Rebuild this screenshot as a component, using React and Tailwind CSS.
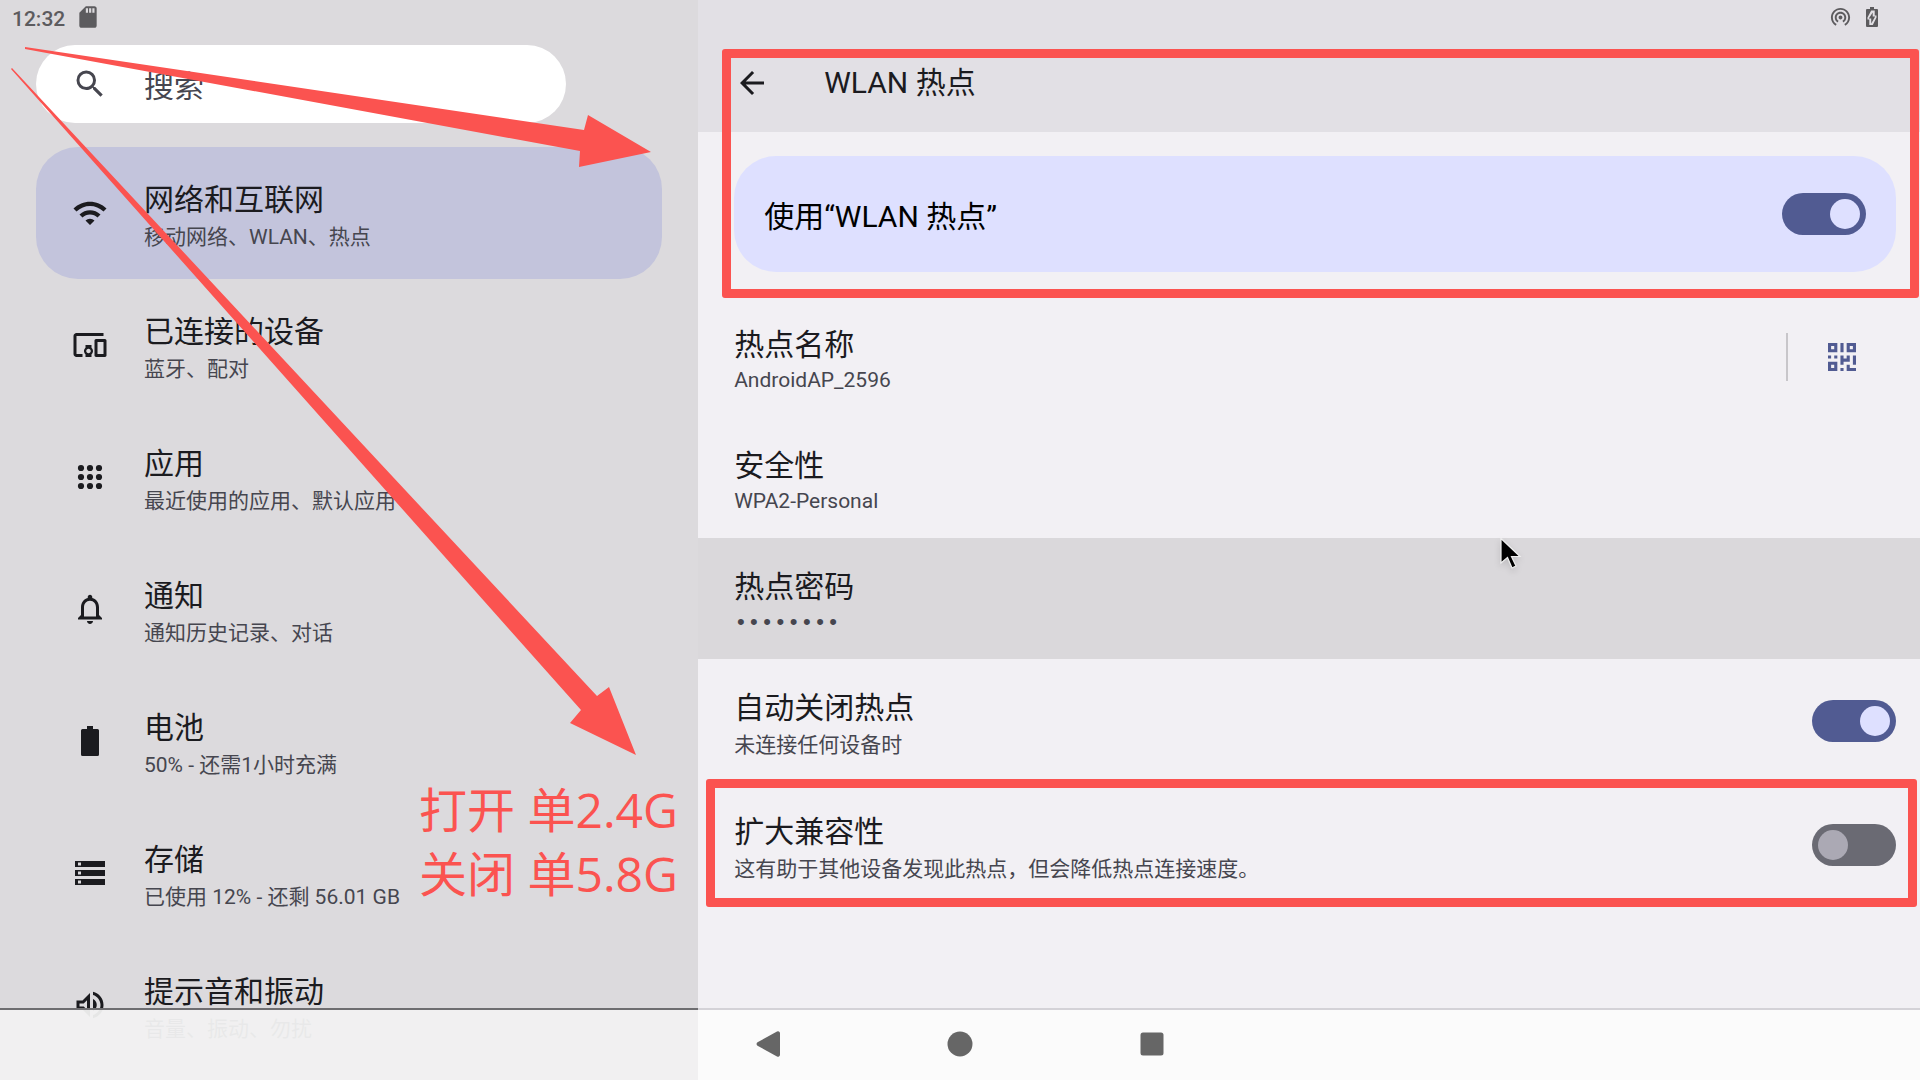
import React, { useState } from 'react';
import {
  MdSearch, MdWifi, MdOutlineDevicesOther, MdNotificationsNone,
  MdStorage, MdOutlineVolumeUp, MdArrowBack, MdSdCard, MdWifiTethering,
} from 'react-icons/md';

const AppsIcon = ({ className }) => (
  <svg viewBox="0 0 36 36" className={className} fill="currentColor" aria-hidden="true">
    {[9, 18, 27].map((y) => [9, 18, 27].map((x) => <circle key={`${x}-${y}`} cx={x} cy={y} r="3.100" />))}
  </svg>
);

const BatteryFullIcon = ({ className }) => (
  <svg viewBox="0 0 36 36" className={className} fill="currentColor" aria-hidden="true">
    <path d="M15 3h6v3h4.500A1.500 1.500 0 0 1 27 7.500v24a1.500 1.500 0 0 1-1.500 1.500h-15A1.500 1.500 0 0 1 9 31.500v-24A1.500 1.500 0 0 1 10.500 6H15z" />
  </svg>
);

// Bateria carregando da barra de status
const BatteryIcon = () => (
  <svg viewBox="0 0 12 20" className="h-5 w-3" fill="#5c5b5e" aria-hidden="true">
    <path fillRule="evenodd" d="M4 0h4v2h3a1 1 0 0 1 1 1v16a1 1 0 0 1-1 1H1a1 1 0 0 1-1-1V3a1 1 0 0 1 1-1h3zM5.200 3.500 1.500 10.500v2h1.800v5.500h3.500l3.700-7.500v-2H8.700v-5z" />
    <path d="M6.700 5.500v4h2.500l-4 7v-5H2.800z" />
  </svg>
);

const QrIcon = () => (
  <svg viewBox="0 0 9 9" className="size-7" fill="#515b92" aria-hidden="true">
    <path fillRule="evenodd" d="M0 0h3v3H0zM1 1v1h1V1zM6 0h3v3H6zM7 1v1h1V1zM0 6h3v3H0zM1 7v1h1V7z" />
    <path d="M4 0h1v3H4zM0 4h1v1H0zM2 4h1v1H2zM4 4h1v1h1V4h1v2H5v1H4zM8 4h1v3H8zM4 8h1v1H4zM6 7h1v1h2v1H6z" />
  </svg>
);

const menu = [
  { icon: MdWifi, title: '网络和互联网', summary: '移动网络、WLAN、热点', active: true },
  { icon: MdOutlineDevicesOther, title: '已连接的设备', summary: '蓝牙、配对' },
  { icon: AppsIcon, title: '应用', summary: '最近使用的应用、默认应用' },
  { icon: MdNotificationsNone, title: '通知', summary: '通知历史记录、对话' },
  { icon: BatteryFullIcon, title: '电池', summary: '50% - 还需1小时充满' },
  { icon: MdStorage, title: '存储', summary: '已使用 12% - 还剩 56.01 GB' },
  { icon: MdOutlineVolumeUp, title: '提示音和振动', summary: '音量、振动、勿扰' },
];

const MenuItem = ({ icon: Icon, title, summary, active }) => (
  <a
    href="#"
    className={`flex h-[132px] shrink-0 items-center rounded-[42px] pl-9 ${active ? 'bg-[#c3c4dc]' : ''}`}
  >
    <Icon className="size-9 shrink-0 text-[#1b1b1f]" />
    <span className="flex flex-col pt-1.5 pl-9">
      <span className="text-[30px] leading-[42px] text-[#1b1b1f]">{title}</span>
      <span className="text-[21px] leading-8 text-[#46464f]">{summary}</span>
    </span>
  </a>
);

const Switch = ({ id, checked, onChange }) => (
  <input
    id={id}
    type="checkbox"
    role="switch"
    checked={checked}
    onChange={(e) => onChange(e.target.checked)}
    className="h-[42px] w-[84px] shrink-0 cursor-pointer appearance-none rounded-full bg-[#6a6a73] p-1.5 before:block before:size-[30px] before:rounded-full before:bg-[#aba9b4] checked:bg-[#515b92] checked:before:ml-[42px] checked:before:bg-[#dee0ff]"
  />
);

const RowText = ({ title, children }) => (
  <span className="flex flex-1 flex-col self-start pt-7">
    <span className="text-[30px] leading-[42px] text-[#1b1b1f]">{title}</span>
    <span className="text-[21px] leading-7 text-[#46464f]">{children}</span>
  </span>
);

const Arrows = () => (
  <svg viewBox="0 0 698 800" className="pointer-events-none absolute top-0 left-0 h-[800px] w-[698px]" fill="#fb5350" aria-hidden="true">
    <path d="M25 47 584 130 588 115 651 152 579 167 580 151 25 49Z" />
    <path d="M12 68 597 696 609 687 636 755 570 723 581 710 11 69Z" />
  </svg>
);

const Pointer = () => (
  <svg viewBox="0 0 24 34" className="pointer-events-none absolute top-[536px] left-[800px] h-[34px] w-6 drop-shadow-md" aria-hidden="true">
    <path d="M3 2.500v24.500l6.500-5.500 4.500 10.500 4-2-4.500-9.500h8.500z" fill="#000" stroke="#eee" strokeWidth="1.200" />
  </svg>
);

export default function App() {
  const [hotspot, setHotspot] = useState(true);
  const [autoOff, setAutoOff] = useState(true);
  const [compat, setCompat] = useState(false);

  return (
    <div className="relative flex h-screen overflow-hidden bg-[#f2f0f4] font-[Roboto,'Noto_Sans_CJK_SC',sans-serif]">
      {/* Painel esquerdo */}
      <aside className="relative flex w-4/11 flex-col overflow-hidden bg-[#dcdadd] px-9">
        <div className="-ml-6 flex h-[45px] shrink-0 items-start gap-2.5 pt-1 text-[#5c5b5e]">
          <span className="text-[21px] leading-[30px] font-medium">12:32</span>
          <MdSdCard className="size-[26px]" />
        </div>

        <label className="mr-24 flex h-[78px] shrink-0 items-center rounded-full bg-white pl-9 text-[#46464f]">
          <MdSearch className="size-9 shrink-0" />
          <input
            type="text"
            aria-label="搜索"
            placeholder="搜索"
            className="ml-9 w-full min-w-0 bg-transparent pt-1.5 text-[30px] leading-[42px] outline-none placeholder:text-[#46464f]"
          />
        </label>

        <nav className="mt-6 flex flex-col">
          {menu.map((item) => <MenuItem key={item.title} {...item} />)}
        </nav>

        <div className="absolute inset-x-0 bottom-0 h-18 border-t-2 border-[#6e6d70] bg-[#f1f1f1]/95 bg-clip-padding" />
      </aside>

      {/* Painel direito */}
      <main className="relative flex min-w-0 flex-1 flex-col">
        <header className="flex h-[132px] shrink-0 flex-col bg-[#e2e0e5]">
          <div className="flex h-[34px] items-center justify-end gap-3.5 pr-[42px] text-[#5c5b5e]">
            <MdWifiTethering className="size-[23px]" />
            <BatteryIcon />
          </div>
          <div className="flex h-[100px] items-center pl-9">
            <button type="button" aria-label="返回"><MdArrowBack className="size-9 text-[#1b1b1f]" /></button>
            <h1 className="pl-[54px] text-[30px] leading-[42px] text-[#1b1b1f]">WLAN 热点</h1>
          </div>
        </header>

        <section className="flex min-h-0 flex-1 flex-col">
          <label htmlFor="hotspot" className="my-6 mr-6 ml-9 flex h-[116px] shrink-0 items-center justify-between rounded-[42px] bg-[#dee0ff] px-[30px]">
            <span className="pt-1.5 text-[30px] leading-[42px] text-black">使用“WLAN 热点”</span>
            <Switch id="hotspot" checked={hotspot} onChange={setHotspot} />
          </label>

          <div className="flex h-[121px] shrink-0 items-center pl-9">
            <RowText title="热点名称">AndroidAP_2596</RowText>
            <div className="flex h-12 w-[134px] items-center border-l-2 border-[#c8c6ca] pl-10">
              <button type="button" aria-label="二维码"><QrIcon /></button>
            </div>
          </div>
          <div className="flex h-[121px] shrink-0 items-center pl-9">
            <RowText title="安全性">WPA2-Personal</RowText>
          </div>
          <div className="flex h-[121px] shrink-0 items-center bg-[#dad8db] pl-9">
            <RowText title="热点密码"><span className="font-['Liberation_Mono',monospace] text-[22px]">••••••••</span></RowText>
          </div>
          <label htmlFor="auto-off" className="flex h-[124px] shrink-0 items-center pr-6 pl-9">
            <RowText title="自动关闭热点"><span className="leading-8">未连接任何设备时</span></RowText>
            <Switch id="auto-off" checked={autoOff} onChange={setAutoOff} />
          </label>
          <label htmlFor="compat" className="relative flex h-[124px] shrink-0 items-center pr-6 pl-9">
            <RowText title="扩大兼容性"><span className="leading-8">这有助于其他设备发现此热点，但会降低热点连接速度。</span></RowText>
            <Switch id="compat" checked={compat} onChange={setCompat} />
            <span className="pointer-events-none absolute -top-1 right-[3px] bottom-0 left-2 rounded-[3px] border-9 border-[#fb5350]" />
          </label>
        </section>

        <div className="h-18 shrink-0 border-t-2 border-[#d4d2d7] bg-[#fbfbfb]" />

        {/* Destaques */}
        <div className="pointer-events-none absolute top-[49px] right-px left-6 h-[249px] rounded-[3px] border-9 border-[#fb5350]" />
        <Pointer />
      </main>

      {/* Barra de navegação */}
      <nav className="absolute inset-x-0 bottom-0 flex h-18 items-center justify-center gap-[156px]">
        <button type="button" aria-label="返回" className="size-9">
          <svg viewBox="0 0 36 36" className="size-9" fill="#666"><path d="M27 5.500a2 2 0 0 1 3 1.700v21.600a2 2 0 0 1-3 1.700L7.500 19.700a2 2 0 0 1 0-3.400z" /></svg>
        </button>
        <button type="button" aria-label="主屏幕" className="size-9">
          <svg viewBox="0 0 36 36" className="size-9" fill="#666"><circle cx="18" cy="18" r="12.500" /></svg>
        </button>
        <button type="button" aria-label="最近任务" className="size-9">
          <svg viewBox="0 0 36 36" className="size-9" fill="#666"><rect x="6.500" y="6.500" width="23" height="23" rx="2.500" /></svg>
        </button>
      </nav>

      <Arrows />
      <p className="pointer-events-none absolute top-[778px] left-[419px] font-['Open_Sans','Noto_Sans_CJK_SC',sans-serif] text-[48px] leading-16 text-[#fb5350]">
        打开 单2.4G<br />关闭 单5.8G
      </p>
    </div>
  );
}
